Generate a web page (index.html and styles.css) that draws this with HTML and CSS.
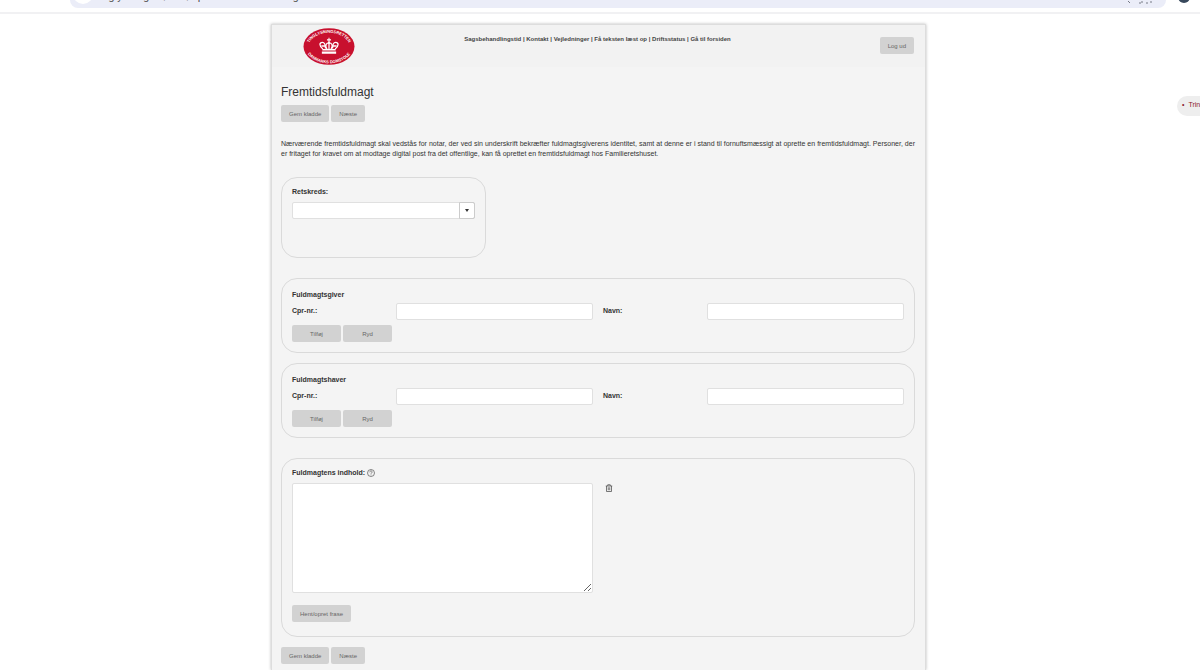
FILE: index.html
```html
<!DOCTYPE html>
<html lang="da">
<head>
    <meta charset="UTF-8">
    <meta name="viewport" content="width=device-width, initial-scale=1.0">
    <title>Fremtidsfuldmagt</title>
    <link rel="stylesheet" href="styles.css">
</head>
<body>

<div class="browser-bar">
    <div class="address">
        <span class="site-info"></span>
        <span class="url">tinglysning.dk/tmv/opretfremtidsfuldmagt</span>
        <svg class="address-icons" width="30" height="6" viewBox="0 0 30 6"><path d="M2 3l2 2M13 5h2M16 3v2M20 5h2M25 3v2" stroke="#777a85" fill="none"/></svg>
    </div>
    <span class="avatar"></span>
</div>

<div class="page">
    <header>
        <svg class="logo" viewBox="0 0 102 76" role="img" aria-label="Tinglysningsretten, Danmarks Domstole">
            <defs>
                <path id="arc-top" d="M10 40a41 29 0 0 1 82 0"/>
                <path id="arc-bottom" d="M4 37a47 34 0 0 0 94 0"/>
            </defs>
            <ellipse cx="51" cy="38" rx="50" ry="36" fill="#c8102e"/>
            <g class="logo-text">
                <text><textPath href="#arc-top" startOffset="50%">TINGLYSNINGSRETTEN</textPath></text>
                <text><textPath href="#arc-bottom" startOffset="50%">DANMARKS DOMSTOLE</textPath></text>
            </g>
            <g fill="#fff">
                <path d="M50 21h2v3h3v2h-3v3h-2v-3h-3v-2h3z"/>
                <path d="M38 43h26v3H38zM37 48h28v4H37z"/>
                <circle cx="51" cy="30" r="2"/>
            </g>
            <g fill="none" stroke="#fff" stroke-width="2.500">
                <path d="M39 43c-8-6-7-13-1-13 5 0 6 6 6 12M63 43c8-6 7-13 1-13-5 0-6 6-6 12"/>
                <path d="M47 43c-5-8-1-12 4-12s9 4 4 12M51 31v12M36 37h8M58 37h8"/>
            </g>
        </svg>
        <nav>
            <a href="#">Sagsbehandlingstid</a> | <a href="#">Kontakt</a> | <a href="#">Vejledninger</a> | <a href="#">Få teksten læst op</a> | <a href="#">Driftsstatus</a> | <a href="#">Gå til forsiden</a>
        </nav>
        <button type="button" class="btn">Log ud</button>
    </header>

    <main>
        <h1>Fremtidsfuldmagt</h1>
        <div class="buttons">
            <button type="button" class="btn">Gem kladde</button>
            <button type="button" class="btn">Næste</button>
        </div>

        <p class="intro">Nærværende fremtidsfuldmagt skal vedstås for notar, der ved sin underskrift bekræfter fuldmagtsgiverens identitet, samt at denne er i stand til fornuftsmæssigt at oprette en fremtidsfuldmagt. Personer, der er fritaget for kravet om at modtage digital post fra det offentlige, kan få oprettet en fremtidsfuldmagt hos Familieretshuset.</p>

        <form>
            <section class="box court">
                <label for="retskreds">Retskreds:</label>
                <div class="combo">
                    <select id="retskreds"><option></option></select>
                    <span class="combo-arrow"></span>
                </div>
            </section>

            <section class="box person">
                <h2>Fuldmagtsgiver</h2>
                <div class="fields">
                    <label for="giver-cpr">Cpr-nr.:</label>
                    <input type="text" id="giver-cpr">
                    <label for="giver-navn">Navn:</label>
                    <input type="text" id="giver-navn">
                </div>
                <div class="buttons wide">
                    <button type="button" class="btn">Tilføj</button>
                    <button type="button" class="btn">Ryd</button>
                </div>
            </section>

            <section class="box person">
                <h2>Fuldmagtshaver</h2>
                <div class="fields">
                    <label for="haver-cpr">Cpr-nr.:</label>
                    <input type="text" id="haver-cpr">
                    <label for="haver-navn">Navn:</label>
                    <input type="text" id="haver-navn">
                </div>
                <div class="buttons wide">
                    <button type="button" class="btn">Tilføj</button>
                    <button type="button" class="btn">Ryd</button>
                </div>
            </section>

            <section class="box content">
                <div class="content-label">
                    <label for="indhold">Fuldmagtens indhold:</label>
                    <button type="button" class="icon-btn" aria-label="Hjælp">
                        <svg width="8" height="8" viewBox="0 0 16 16" fill="none" stroke="#555" stroke-width="1.4"><circle cx="8" cy="8" r="7"/><path d="M5.5 6.5c0-3.5 5-3 5-.5 0 2-2.5 1.500-2.500 3.500M8 11v1.500"/></svg>
                    </button>
                </div>
                <div class="content-row">
                    <textarea id="indhold"></textarea>
                    <button type="button" class="icon-btn" aria-label="Slet">
                        <svg width="8" height="8" viewBox="0 0 16 16" fill="none" stroke="#555" stroke-width="1.600"><path d="M1.500 4h13M5.500 4V1.500h5V4M3 4v11h10V4M6.500 6.500v6M9.500 6.500v6"/></svg>
                    </button>
                </div>
                <button type="button" class="btn">Hent/opret frase</button>
            </section>
        </form>

        <div class="buttons">
            <button type="button" class="btn">Gem kladde</button>
            <button type="button" class="btn">Næste</button>
        </div>
    </main>
</div>

<aside class="steps"><a href="#">Trin</a></aside>

</body>
</html>
```
FILE: styles.css
```css
* { box-sizing: border-box; }
body {
    font-family: "Liberation Sans", Arial, sans-serif;
    font-size: 7px; line-height: 10px; color: #333;
    margin: 0; padding-right: 3px; min-height: 100vh; background-color: #fff;
    display: flex; flex-direction: column; overflow-x: hidden;
}
h1, h2, p { margin: 0; }
a { color: inherit; text-decoration: none; }
button, input, select, textarea { font-family: inherit; font-size: 7px; color: inherit; margin: 0; }

/* bottom edge of the browser toolbar */
.browser-bar {
    display: flex; align-items: flex-start; height: 14px; padding: 0 10px 0 70px; margin-right: -3px;
    border-bottom: 2px solid #f1f1f3; overflow: hidden;
}
.address {
    flex: 1; display: flex; align-items: flex-end; gap: 3px; height: 8px; padding: 0 10px 0 3px;
    background-color: #ebedf8; border-radius: 0 0 14px 14px;
}
.site-info { width: 20px; height: 20px; margin-bottom: 4px; border-radius: 50%; background-color: #fff; }
.url { flex: 1; font-family: Roboto, sans-serif; font-size: 11px; line-height: 14px; margin-bottom: 4px; color: #555; }
.address-icons { margin-bottom: 4px; }
.avatar { width: 12px; height: 12px; margin: -9px 0 0 12px; border-radius: 50%; background-color: #38495c; }

.page {
    flex: 1; width: calc(100% - 20px); max-width: 655px; margin: 10px auto 0;
    background-color: #f4f4f4; border: 1px solid #ddd; border-bottom: none;
    box-shadow: 0 0 3px #bbb;
}
header {
    display: grid; grid-template-columns: 90px 1fr 90px; align-items: start;
    padding: 2px 11px 1px 9px; background-color: #f2f2f2;
}
header .logo { width: 52px; height: 39px; margin-left: 22px; }
header nav { padding-top: 7px; font-size: 6px; font-weight: bold; text-align: center; color: #444; }
header .btn { justify-self: end; margin-top: 10px; }
.logo-text { font-size: 8px; font-weight: bold; fill: #fff; text-anchor: middle; }

main { padding: 17px 10px 6px 9px; }
h1 { font-size: 12px; line-height: 16px; font-weight: normal; margin-bottom: 5px; }
h2, label { font-size: 7px; line-height: 10px; font-weight: bold; }

.buttons { display: flex; gap: 2px; }
.btn {
    height: 17px; padding: 0 8px; border: none; border-radius: 2px;
    background-color: #d2d2d2; color: #666; font-size: 6px; cursor: pointer;
}
.btn:hover { background-color: #c6c6c6; }
.wide .btn { width: 49px; }

.intro { margin: 17px 0 18px; text-align: justify; }

.box { padding: 11px 10px 10px; border: 1px solid #dadada; border-radius: 16px; margin-bottom: 10px; }
input, select, textarea { width: 100%; border: 1px solid #e0e0e0; border-radius: 2px; background-color: #fff; }
input, select { height: 17px; padding: 0 4px; }

.court { width: 205px; min-height: 81px; padding-top: 9px; margin-bottom: 20px; }
.combo { position: relative; margin-top: 5px; }
.combo select { display: block; appearance: none; }
.combo-arrow {
    position: absolute; top: 0; right: 0; width: 16px; height: 17px; pointer-events: none;
    display: flex; align-items: center; justify-content: center;
    border: 1px solid #ccc; border-radius: 0 2px 2px 0;
}
.combo-arrow::before { content: ""; border: 2px solid transparent; border-top: 3px solid #333; border-bottom: none; }

.fields { display: grid; grid-template-columns: 94px 1fr 94px 1fr; column-gap: 10px; margin: 3px 0 5px; }
.fields label { line-height: 15px; }

.content { padding: 9px 10px 14px; margin-top: 20px; }
.content-label { display: flex; align-items: center; gap: 2px; margin-bottom: 5px; }
.content-row { display: flex; align-items: flex-start; gap: 12px; margin-bottom: 12px; }
.content textarea { display: block; width: 301px; height: 110px; }
.icon-btn { display: flex; padding: 0; border: none; background: none; cursor: pointer; }
.content-row .icon-btn { margin-top: 1px; }

/* step menu peeking in from the right edge */
.steps {
    position: absolute; top: 96px; right: 0; width: 23px; height: 20px; padding-left: 5px;
    border-radius: 10px 0 0 10px; background-color: #eee; color: #8b1a2b;
    line-height: 18px; white-space: nowrap; overflow: hidden;
}
.steps a::before { content: "•"; margin-right: 4px; }
```
